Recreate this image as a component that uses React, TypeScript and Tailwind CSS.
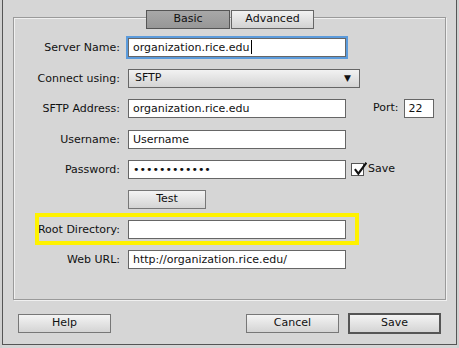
import React from "react";

const font = { fontFamily: '"DejaVu Sans", "Liberation Sans", sans-serif' };

function Label({ children }: { children: React.ReactNode }) {
  return (
    <div className="w-[107px] shrink-0 text-right pr-[1px] text-[11px] leading-[19px] text-[#111]">
      {children}
    </div>
  );
}

function TextInput({ value, w = "w-[218px]", focus = false }: { value: string; w?: string; focus?: boolean }) {
  return (
    <div
      className={`${w} h-[19px] bg-white border border-[#666] pl-[4px] text-[11px] leading-[17px] text-[#111] whitespace-nowrap overflow-hidden ${
        focus ? "outline outline-[2px] outline-[#5b9bdc]" : ""
      }`}
    >
      {value}
      {focus && <span className="inline-block w-[1px] h-[14px] bg-black align-middle ml-[1px] -mt-[2px]" />}
    </div>
  );
}

function Button({ children, w, def = false }: { children: React.ReactNode; w: string; def?: boolean }) {
  return (
    <div
      className={`${w} flex items-center justify-center text-[11px] text-[#111] bg-gradient-to-b from-[#f4f4f4] to-[#d4d4d4] ${
        def ? "border-[2px] border-[#555] h-[21px]" : "border border-[#777] h-[19px]"
      }`}
    >
      {children}
    </div>
  );
}

export default function App() {
  return (
    <div className="w-[459px] h-[348px] bg-[#d6d6d6] overflow-hidden flex" style={font}>
      <div className="w-[2px] shrink-0 bg-[#d0d0d0]" />
      <div className="w-[455px] h-[345px] shrink-0 border-l border-r border-b border-[#555] bg-[#d6d6d6] flex flex-col">
        {/* group box */}
        <div className="relative mt-[17px] mx-[10px] h-[283px] border border-[#9a9a9a] shadow-[inset_1px_1px_0_#f0f0f0,1px_1px_0_#f0f0f0]">
          {/* tabs */}
          <div className="absolute left-[132px] -top-[8px] flex">
            <div className="w-[84px] h-[19px] flex items-center justify-center text-[11px] text-[#111] border border-[#555] bg-gradient-to-b from-[#a8a8a8] to-[#979797]">
              Basic
            </div>
            <div className="w-[83px] h-[19px] ml-[1px] flex items-center justify-center text-[11px] text-[#111] border border-[#666] bg-gradient-to-b from-[#f2f2f2] to-[#d2d2d2]">
              Advanced
            </div>
          </div>

          <div className="flex flex-col pt-[20px]">
            <div className="flex items-center">
              <Label>Server Name:</Label>
              <div className="ml-[7px]">
                <TextInput value="organization.rice.edu" focus />
              </div>
            </div>

            <div className="flex items-center mt-[12px]">
              <Label>Connect using:</Label>
              <div className="ml-[7px] w-[232px] h-[19px] border border-[#666] bg-gradient-to-b from-[#f2f2f2] to-[#d4d4d4] flex items-center justify-between pl-[6px] pr-[8px] text-[11px] text-[#111]">
                <span>SFTP</span>
                <span className="text-[9px] leading-none">▼</span>
              </div>
            </div>

            <div className="flex items-center mt-[11px]">
              <Label>SFTP Address:</Label>
              <div className="ml-[7px]">
                <TextInput value="organization.rice.edu" />
              </div>
              <div className="ml-[27px] text-[11px] text-[#111]">Port:</div>
              <div className="ml-[5px]">
                <TextInput value="22" w="w-[30px]" />
              </div>
            </div>

            <div className="flex items-center mt-[12px]">
              <Label>Username:</Label>
              <div className="ml-[7px]">
                <TextInput value="Username" />
              </div>
            </div>

            <div className="flex items-center mt-[11px]">
              <Label>Password:</Label>
              <div className="ml-[7px]">
                <TextInput value="••••••••••••" />
              </div>
              <div className="ml-[5px] w-[13px] h-[13px] bg-white border border-[#555] relative">
                <svg viewBox="0 0 13 13" className="absolute -top-[3px] left-[0px] w-[15px] h-[15px]">
                  <path d="M2.5 7 L5.5 11 L12.5 1.5" fill="none" stroke="#111" strokeWidth="1.8" />
                </svg>
              </div>
              <div className="ml-[4px] text-[11px] text-[#111]">Save</div>
            </div>

            <div className="flex items-center mt-[11px]">
              <div className="w-[107px] shrink-0" />
              <div className="ml-[7px]">
                <Button w="w-[78px]">Test</Button>
              </div>
            </div>

            <div className="relative flex items-center mt-[11px]">
              <div className="absolute left-[21px] -top-[7px] w-[324px] h-[32px] border-[4px] border-[#fff200]" />
              <Label>Root Directory:</Label>
              <div className="ml-[7px]">
                <TextInput value="" />
              </div>
            </div>

            <div className="flex items-center mt-[11px]">
              <Label>Web URL:</Label>
              <div className="ml-[7px]">
                <TextInput value="http://organization.rice.edu/" />
              </div>
            </div>
          </div>
        </div>

        {/* buttons */}
        <div className="flex items-center mt-[13px] px-[15px]">
          <Button w="w-[93px]">Help</Button>
          <div className="flex-1" />
          <Button w="w-[93px]">Cancel</Button>
          <div className="ml-[9px]">
            <Button w="w-[93px]" def>
              Save
            </Button>
          </div>
        </div>
      </div>
      <div className="flex-1 bg-[#d0d0d0]" />
    </div>
  );
}
